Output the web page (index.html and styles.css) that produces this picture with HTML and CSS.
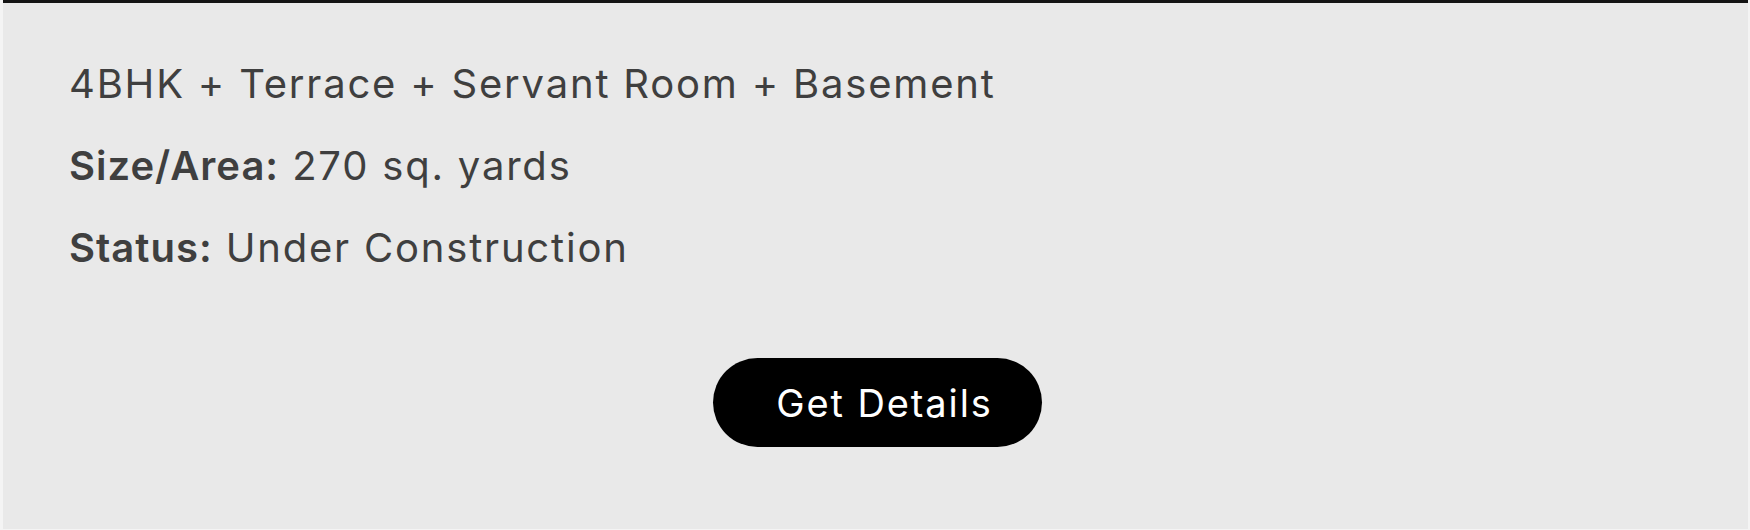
FILE: index.html
```html
<!DOCTYPE html>
<html lang="en">
<head>
<meta charset="utf-8">
<title>Property details</title>
<link rel="stylesheet" href="styles.css">
</head>
<body>
  <div class="card">
    <div class="info">
      <p class="line">4BHK + Terrace + Servant Room + Basement</p>
      <p class="line"><strong>Size/Area:</strong> 270 sq. yards</p>
      <p class="line"><strong>Status:</strong> Under Construction</p>
    </div>
    <div class="actions">
      <a class="btn" href="#">Get Details</a>
    </div>
  </div>
</body>
</html>
```

FILE: styles.css
```css
html, body {
  margin: 0;
  padding: 0;
}
body {
  background: #f4f4f4;
  width: 1750px;
  height: 530px;
  overflow: hidden;
  font-family: Inter, "Open Sans", sans-serif;
}
.card {
  margin: 0 2px 0 3px;
  height: 529px;
  box-sizing: border-box;
  background: #e9e9e9;
  border-top: 3px solid #141414;
  padding: 40px 0 0 66px;
}
.line {
  margin: 0;
  font-size: 40px;
  line-height: 82px;
  color: #3f3f3f;
  font-weight: 400;
  letter-spacing: 1.8px;
}
.line strong {
  font-weight: 600;
  letter-spacing: 1px;
}
.actions {
  display: flex;
  justify-content: center;
  margin: 69px 0 0 -62px;
}
.btn {
  display: flex;
  align-items: center;
  justify-content: center;
  box-sizing: border-box;
  width: 329px;
  height: 89px;
  padding-left: 14px;
  border-radius: 45px;
  background: #000;
  color: #fff;
  font-size: 38px;
  letter-spacing: 1.9px;
  text-decoration: none;
}
```
